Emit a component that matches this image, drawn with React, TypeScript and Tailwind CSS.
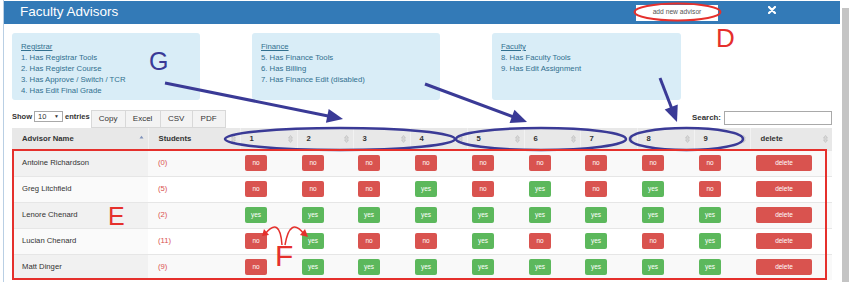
import React from 'react'

const rows = [
  { name: 'Antoine Richardson', students: 0, perms: [0, 0, 0, 0, 0, 0, 0, 0, 0] },
  { name: 'Greg Litchfield', students: 5, perms: [0, 0, 0, 1, 0, 1, 0, 1, 0] },
  { name: 'Lenore Chenard', students: 2, perms: [1, 1, 1, 1, 1, 1, 1, 1, 1] },
  { name: 'Lucian Chenard', students: 11, perms: [0, 1, 0, 0, 1, 0, 1, 0, 1] },
  { name: 'Matt Dinger', students: 9, perms: [0, 1, 1, 1, 1, 1, 1, 1, 1] },
]

const permCols = ['1', '2', '3', '4', '5', '6', '7', '8', '9']
const permWidths = ['w-[57px]', 'w-[56px]', 'w-[57px]', 'w-[57px]', 'w-[57px]', 'w-[56px]', 'w-[57px]', 'w-[57px]', 'w-[56px]']

const groups = [
  { title: 'Registrar', items: ['1. Has Registrar Tools', '2. Has Register Course', '3. Has Approve / Switch / TCR', '4. Has Edit Final Grade'] },
  { title: 'Finance', items: ['5. Has Finance Tools', '6. Has Billing', '7. Has Finance Edit (disabled)'] },
  { title: 'Faculty', items: ['8. Has Faculty Tools', '9. Has Edit Assignment'] },
]

const SortIcon = () => (
  <svg width="5" height="8" viewBox="0 0 5 8" className="shrink-0">
    <path d="M2.5 0.6 L4.4 3.1 L0.6 3.1 Z M2.5 7.4 L4.4 4.9 L0.6 4.9 Z" fill="none" stroke="#b4b4b4" strokeWidth="0.7" />
  </svg>
)

const SortAsc = () => (
  <svg width="5" height="8" viewBox="0 0 5 8" className="shrink-0">
    <path d="M2.5 0.8 L4.5 3.6 L0.5 3.6 Z" fill="#8093bb" />
  </svg>
)

// arrow line with a filled head at (x2, y2)
const Arrow = ({ x1, y1, x2, y2, len = 16, half = 7 }: { x1: number; y1: number; x2: number; y2: number; len?: number; half?: number }) => {
  const d = Math.hypot(x2 - x1, y2 - y1)
  const ux = (x2 - x1) / d
  const uy = (y2 - y1) / d
  const bx = x2 - ux * len
  const by = y2 - uy * len
  const pts = `${x2},${y2} ${bx - uy * half},${by + ux * half} ${bx + uy * half},${by - ux * half}`
  return (
    <g>
      <line x1={x1} y1={y1} x2={bx + ux * 2} y2={by + uy * 2} stroke="#3a3a96" strokeWidth="3" />
      <polygon points={pts} fill="#3a3a96" />
    </g>
  )
}

const Pill = ({ on }: { on: number }) => (
  <div
    className={
      on
        ? 'flex h-[16px] w-[22px] items-center justify-center rounded-[2px] bg-[#5cb85c] text-[6.5px] text-white'
        : 'flex h-[16px] w-[22px] items-center justify-center rounded-[2px] bg-[#d9534f] text-[6.5px] text-white'
    }
  >
    {on ? 'yes' : 'no'}
  </div>
)

export default function App() {
  return (
    <div className="relative h-[282px] w-[850px] overflow-hidden bg-white font-['Liberation_Sans',Arial,sans-serif] text-[#333]">
      <div className="flex h-full">
        <div className="ml-[3px] h-full w-[837px] border-l border-[#b9cfe4]">
          {/* title bar */}
          <div className="mt-px flex h-[23px] items-center bg-[#337ab7] pl-[16px] pr-[64px]">
            <span className="text-[13.5px] text-white">Faculty Advisors</span>
            <div className="ml-auto flex h-[16px] w-[82px] items-center justify-center bg-white text-[6.7px] text-[#555]">
              add new advisor
            </div>
            <svg width="8" height="8" viewBox="0 0 8 8" className="ml-[50px] mb-[6px]">
              <path d="M1 1 L7 7 M7 1 L1 7" stroke="white" strokeWidth="2.2" strokeLinecap="round" />
            </svg>
          </div>

          <div className="px-[8px]">
            {/* permission legend */}
            <div className="mt-[9px] flex gap-[52px]">
              {groups.map((g, i) => (
                <div
                  key={g.title}
                  className={
                    (i === 2 ? 'w-[189px] ' : 'w-[188px] ') +
                    'h-[67px] rounded-[3px] bg-[#d9edf7] pl-[9px] pt-[8px] text-[7.75px] leading-[11px] text-[#31708f]'
                  }
                >
                  <div className="underline">{g.title}</div>
                  {g.items.map((it) => (
                    <div key={it}>{it}</div>
                  ))}
                </div>
              ))}
            </div>

            {/* controls */}
            <div className="mt-[10px] flex h-[18px] justify-between">
              <div className="flex items-start">
                <div className="mt-[1px] flex h-[11px] items-center text-[7.5px] font-bold">
                  <span>Show</span>
                  <div className="ml-[2px] mr-[2px] flex h-[11px] w-[29px] items-center justify-between border border-[#a9a9a9] px-[3px] font-normal">
                    <span>10</span>
                    <span className="text-[5px]">▼</span>
                  </div>
                  <span>entries</span>
                </div>
                <div className="ml-px flex h-[18px] text-[8px]">
                  {['Copy', 'Excel', 'CSV', 'PDF'].map((b, i) => (
                    <div
                      key={b}
                      className={
                        (i === 1 ? 'w-[35px] ' : i === 2 ? 'w-[32px] ' : i === 3 ? 'w-[34px] ' : 'w-[34px] ') +
                        'flex items-center justify-center border border-r-0 border-[#d8d8d8] bg-[#f3f3f3] last:border-r'
                      }
                    >
                      {b}
                    </div>
                  ))}
                </div>
              </div>
              <div className="mt-px flex h-[14px] items-center gap-[3px]">
                <span className="text-[7.9px] font-bold">Search:</span>
                <div className="h-[14px] w-[108px] border border-[#a9a9a9] bg-white" />
              </div>
            </div>

            {/* table */}
            <table className="w-[820px] table-fixed border-collapse text-[7.7px]">
              <colgroup>
                <col className="w-[136px]" />
                <col className="w-[92px]" />
                {permWidths.map((w, i) => (
                  <col key={i} className={w} />
                ))}
                <col className="w-[82px]" />
              </colgroup>
              <thead>
                <tr className="h-[22px] bg-[#e8e8e8] font-bold">
                  <th className="border-r border-[#f2f2f2] pl-[10px] pr-[4px] text-left">
                    <div className="flex items-center justify-between">
                      <span>Advisor Name</span>
                      <SortAsc />
                    </div>
                  </th>
                  <th className="border-r border-[#f2f2f2] pl-[10px] pr-[4px] text-left">
                    <div className="flex items-center justify-between">
                      <span>Students</span>
                      <SortIcon />
                    </div>
                  </th>
                  {permCols.map((c) => (
                    <th key={c} className="border-r border-[#f2f2f2] pl-[9px] pr-[4px] text-left">
                      <div className="flex items-center justify-between">
                        <span>{c}</span>
                        <SortIcon />
                      </div>
                    </th>
                  ))}
                  <th className="pl-[10px] pr-[4px] text-left">
                    <div className="flex items-center justify-between">
                      <span>delete</span>
                      <SortIcon />
                    </div>
                  </th>
                </tr>
              </thead>
              <tbody>
                {rows.map((r, i) => (
                  <tr key={r.name} className={(i % 2 === 0 ? 'bg-[#f9f9f9] ' : 'bg-white ') + 'h-[26px] border-t border-[#e6e6e6]'}>
                    <td className={(i % 2 === 0 ? 'bg-[#f1f1f1] ' : 'bg-[#fafafa] ') + 'pl-[10px]'}>{r.name}</td>
                    <td className="pl-[10px] text-[#d9534f]">({r.students})</td>
                    {r.perms.map((p, j) => (
                      <td key={j} className="pl-[5px]">
                        <Pill on={p} />
                      </td>
                    ))}
                    <td className="pl-[6px]">
                      <div className="flex h-[16px] w-[56px] items-center justify-center rounded-[2px] bg-[#d9534f] text-[6.5px] text-white">
                        delete
                      </div>
                    </td>
                  </tr>
                ))}
              </tbody>
            </table>
          </div>
        </div>
        <div className="w-[10px] pt-[8px]">
          <div className="ml-[2px] h-full w-[7px] bg-[#c4c4c4]" />
        </div>
      </div>

      {/* annotations drawn over the screenshot */}
      <svg className="pointer-events-none absolute left-0 top-0" width="850" height="282" viewBox="0 0 850 282">
        <ellipse cx="677.5" cy="12" rx="43" ry="8.5" fill="none" stroke="#e5302c" strokeWidth="2" />
        <Arrow x1={165} y1={83} x2={343} y2={119} />
        <Arrow x1={425} y1={84} x2={527} y2={122} />
        <Arrow x1={660} y1={78} x2={677} y2={122} />
        <ellipse cx="340" cy="139" rx="115" ry="11" fill="none" stroke="#3a3a96" strokeWidth="2.5" />
        <ellipse cx="541" cy="139" rx="85" ry="11" fill="none" stroke="#3a3a96" strokeWidth="2.5" />
        <ellipse cx="686.5" cy="139" rx="56.5" ry="11" fill="none" stroke="#3a3a96" strokeWidth="2.5" />
        <rect x="13" y="150" width="813" height="129" fill="none" stroke="#e5302c" strokeWidth="2" />
        <path d="M282 245 Q280 216 265 234" fill="none" stroke="#e5302c" strokeWidth="1.5" />
        <polygon points="262,236 264,229 269,235" fill="#e5302c" />
        <path d="M285 245 Q290 216 304 234" fill="none" stroke="#e5302c" strokeWidth="1.5" />
        <polygon points="308,237 300,235 305,229" fill="#e5302c" />
      </svg>
      <span className="absolute left-[149px] top-[49px] text-[25px] leading-none text-[#3a3a96]">G</span>
      <span className="absolute left-[716px] top-[25px] text-[26px] leading-none text-[#e5302c]">D</span>
      <span className="absolute left-[108px] top-[204px] text-[25px] leading-none text-[#e5302c]">E</span>
      <span className="absolute left-[275px] top-[241px] text-[30px] leading-none text-[#e5302c]">F</span>
    </div>
  )
}
